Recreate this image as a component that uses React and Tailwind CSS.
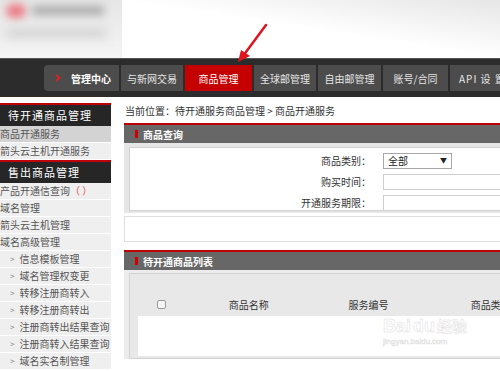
import React from "react";

const navTabs = [
  { label: "与新网交易", width: "w-[62px]" },
  { label: "商品管理", width: "w-[67px]", active: true },
  { label: "全球邮管理", width: "w-[62px]" },
  { label: "自由邮管理", width: "w-[63px]" },
  { label: "账号/合同", width: "w-[65px]" },
  { label: "API 设 置", width: "w-[70px]", spaced: true },
];

const soldItems = [
  { label: "产品开通信查询", extra: "（ ）" },
  { label: "域名管理" },
  { label: "箭头云主机管理" },
  { label: "域名高级管理" },
  { label: "信息模板管理", sub: true },
  { label: "域名管理权变更", sub: true },
  { label: "转移注册商转入", sub: true },
  { label: "转移注册商转出", sub: true },
  { label: "注册商转出结果查询", sub: true },
  { label: "注册商转入结果查询", sub: true },
  { label: "域名实名制管理", sub: true },
];

function SideHeader({ children }) {
  return (
    <div className="h-[23px] border-t-2 border-[#c00000] bg-[#262626] pl-[8px] text-[11px] leading-[21px] tracking-[1px] text-white">
      {children}
    </div>
  );
}

function SideItem({ label, extra, sub, active }) {
  return (
    <div
      className={`flex h-[17px] items-center whitespace-nowrap border-b border-white text-[10px] leading-[16px] text-[#555] ${
        active ? "bg-[#d3d3d3]" : "bg-[#efefef]"
      } ${sub ? "pl-[10px]" : "pl-0"}`}
    >
      {sub && <span className="mr-[5px] text-[8px] text-[#777]">&gt;</span>}
      <span>{label}</span>
      {extra && <span className="text-[#e84a4a]">{extra}</span>}
    </div>
  );
}

function PanelHeader({ title }) {
  return (
    <div className="flex h-[20px] items-center border-t-2 border-[#c00000] bg-[#676767] pl-[11px]">
      <span className="mr-[5px] h-[8px] w-[3px] bg-[#d00000]" />
      <span className="text-[10px] font-bold text-white">{title}</span>
    </div>
  );
}

function FormRow({ label, children }) {
  return (
    <div className="flex h-[21px] items-center">
      <div className="w-[245px] pr-[4px] text-right text-[10px] text-[#333]">
        {label}：
      </div>
      <div className="ml-[8px]">{children}</div>
    </div>
  );
}

export default function App() {
  return (
    <div className="relative h-[371px] w-[500px] overflow-hidden bg-white font-['Noto_Sans_CJK_SC','Noto_Sans',sans-serif]">
      {/* top banner */}
      <div className="flex h-[58px]">
        <div className="relative w-[122px] overflow-hidden bg-gradient-to-b from-[#e6e6e6] to-[#f4f4f4]">
          <div className="absolute left-[6px] top-[4px] h-[14px] w-[20px] rounded-full bg-[#ec7a82] blur-[4px]" />
          <div className="absolute left-[32px] top-[6px] h-[9px] w-[72px] bg-[#aaaaaa] blur-[4px]" />
          <div className="absolute left-[6px] top-[28px] h-[10px] w-[100px] bg-[#d6d6d6] blur-[5px]" />
        </div>
        <div className="flex-1 bg-gradient-to-bl from-[#e6e6e6] via-white to-white" />
      </div>

      {/* nav */}
      <div className="flex h-[39px] items-center gap-[2px] border-t border-[#555] bg-[#2c2c2c] pl-[44px]">
        <div className="flex h-[26px] w-[75px] shrink-0 items-center whitespace-nowrap rounded-l-[4px] bg-[#4c4c4c] pl-[11px]">
          <svg width="6" height="8" viewBox="0 0 6 8" className="mr-[10px]">
            <path d="M1 1 L4.5 4 L1 7" fill="none" stroke="#e02020" strokeWidth="1.8" />
          </svg>
          <span className="text-[10px] font-bold text-white">管理中心</span>
        </div>
        {navTabs.map((tab) => (
          <div
            key={tab.label}
            className={`flex h-[26px] shrink-0 items-center whitespace-nowrap text-[10px] ${tab.width} ${
              tab.active ? "bg-[#c40000] text-white" : "bg-[#4c4c4c] text-[#e6e6e6]"
            } ${tab.spaced ? "justify-start pl-[9px] tracking-[1px]" : "justify-center"}`}
          >
            {tab.label}
          </div>
        ))}
      </div>

      {/* body */}
      <div className="mt-[6px] flex">
        <aside className="w-[111px] shrink-0">
          <SideHeader>待开通商品管理</SideHeader>
          <SideItem label="商品开通服务" active />
          <SideItem label="箭头云主机开通服务" />
          <SideHeader>售出商品管理</SideHeader>
          {soldItems.map((item) => (
            <SideItem key={item.label} {...item} />
          ))}
        </aside>

        <main className="ml-[13px] w-[430px] shrink-0">
          <div className="h-[20px] pl-[1px] text-[10px] leading-[16px] text-[#333]">
            当前位置：待开通服务商品管理 &gt; 商品开通服务
          </div>

          <PanelHeader title="商品查询" />
          <div className="bg-[#e6e6e6] px-[5px] pb-[2px] pt-[4px]">
            <div className="h-[64px] border border-[#d2d2d2] bg-white pt-[2px]">
              <FormRow label="商品类别">
                <div className="flex h-[16px] w-[69px] items-center justify-between border border-[#a8a8a8] bg-white px-[4px] text-[10px] text-[#222]">
                  <span>全部</span>
                  <span className="text-[7px]">▼</span>
                </div>
              </FormRow>
              <FormRow label="购买时间">
                <div className="h-[16px] w-[140px] border border-[#cfcfcf] bg-white" />
              </FormRow>
              <FormRow label="开通服务期限">
                <div className="h-[16px] w-[140px] border border-[#cfcfcf] bg-white" />
              </FormRow>
            </div>
          </div>
          <div className="mt-[3px] h-[26px] border border-[#dedede] bg-white" />

          <div className="mt-[8px]">
            <PanelHeader title="待开通商品列表" />
            <div className="bg-[#ececec] px-[5px] pt-[3px]">
              <div className="border border-[#d2d2d2] bg-[#e8e8e8] pb-[2px]">
                <div className="flex h-[42px] items-end pb-[5px] text-[10px] leading-[12px] text-[#333]">
                  <div className="flex w-[64px] justify-center">
                    <span className="mb-[2px] h-[9px] w-[9px] rounded-[2px] border border-[#999] bg-[#f6f6f6]" />
                  </div>
                  <div className="w-[110px] text-center">商品名称</div>
                  <div className="w-[130px] text-center">服务编号</div>
                  <div className="w-[115px] text-center">商品类别</div>
                </div>
                <div className="relative ml-[8px] h-[40px] bg-white">
                  <div className="absolute left-[245px] top-[1px] flex flex-col items-start leading-none text-white [-webkit-text-stroke:0.5px_#e0e0e0]">
                    <span className="font-['Liberation_Sans',sans-serif] text-[18px] font-bold">
                      Bai<span className="mx-[2px]">du</span>
                      <span className="font-['Noto_Sans_CJK_SC',sans-serif] text-[15px]">经验</span>
                    </span>
                    <span className="mt-[3px] font-['Liberation_Sans',sans-serif] text-[8px]">
                      jingyan.baidu.com
                    </span>
                  </div>
                </div>
              </div>
            </div>
          </div>
        </main>
      </div>

      {/* red annotation arrow */}
      <svg
        className="pointer-events-none absolute left-0 top-0"
        width="500"
        height="371"
        viewBox="0 0 500 371"
      >
        <line x1="266" y1="25" x2="243" y2="56" stroke="#e0141e" strokeWidth="2.5" strokeLinecap="round" />
        <polygon points="238,62 241,50 250,56" fill="#e0141e" />
      </svg>
    </div>
  );
}
